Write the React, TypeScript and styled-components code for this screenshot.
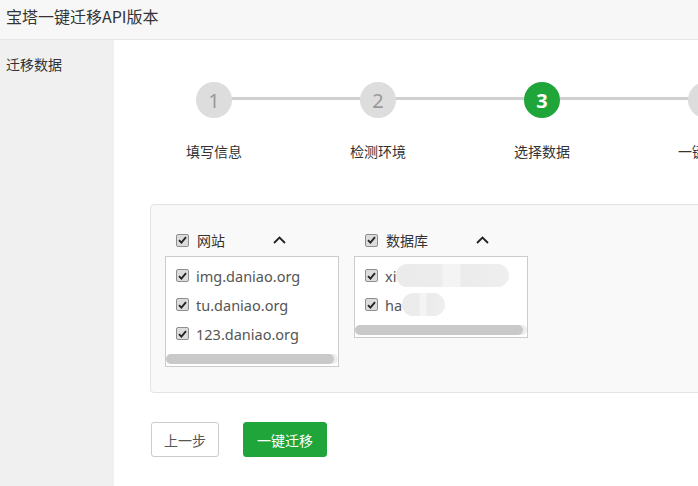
import React from "react";
import styled, { createGlobalStyle } from "styled-components";

const Global = createGlobalStyle`
  html, body { margin: 0; padding: 0; height: 100%; overflow: hidden; background: #fff; }
  body { font-family: "Noto Sans", "Noto Sans CJK SC", sans-serif; color: #333; }
  #root { height: 100%; }
  * { box-sizing: border-box; }
`;

const Page = styled.div`
  display: flex;
  flex-direction: column;
  height: 100vh;
  width: 100%;
`;

const Header = styled.header`
  height: 40px;
  flex: none;
  background: #f7f7f7;
  border-bottom: 1px solid #e6e6e6;
  display: flex;
  align-items: center;
  padding: 0 0 7px 6px;
  font-size: 16px;
  color: #333;
  font-family: "Noto Sans CJK SC", sans-serif;
`;

const Body = styled.div`
  flex: 1;
  display: flex;
  min-height: 0;
`;

const Sidebar = styled.aside`
  width: 114px;
  flex: none;
  background: #f0f0f0;
  padding: 14px 0 0 6px;
  font-size: 14px;
  color: #333;
  font-family: "Noto Sans CJK SC", sans-serif;
`;

const Main = styled.main`
  flex: 1;
  padding: 42px 0 0 36px;
  white-space: nowrap;
  min-width: 0;
  overflow: hidden;
`;

const Steps = styled.div`
  display: flex;
  margin-left: -18px;
`;

const Step = styled.div<{ $last?: boolean }>`
  width: 164px;
  flex: none;
  display: flex;
  flex-direction: column;
  align-items: center;
  position: relative;
  &::after {
    content: "";
    display: ${(p) => (p.$last ? "none" : "block")};
    position: absolute;
    left: 82px;
    width: 164px;
    top: 15px;
    height: 3px;
    background: #d0d0d0;
    z-index: 0;
  }
`;

const Circle = styled.div<{ $active?: boolean }>`
  width: 36px;
  height: 36px;
  border-radius: 50%;
  background: ${(p) => (p.$active ? "#20a53a" : "#dddddd")};
  color: ${(p) => (p.$active ? "#fff" : "#999")};
  font-weight: ${(p) => (p.$active ? 700 : 400)};
  font-size: 20px;
  display: flex;
  align-items: center;
  justify-content: center;
  position: relative;
  z-index: 1;
`;

const StepLabel = styled.div`
  margin-top: 23px;
  font-size: 14px;
  line-height: 20px;
  color: #333;
  font-family: "Noto Sans CJK SC", sans-serif;
`;

const Panel = styled.div`
  margin-top: 43px;
  width: 620px;
  background: #f9f9f9;
  border: 1px solid #e3e3e3;
  border-radius: 4px;
  padding: 25px 14px 25px;
  display: flex;
  align-items: flex-start;
  gap: 15px;
`;

const Group = styled.div`
  width: 174px;
  display: flex;
  flex-direction: column;
`;

const GroupHead = styled.div`
  height: 20px;
  display: flex;
  align-items: center;
  padding-left: 11px;
  margin-bottom: 6px;
  font-size: 14px;
  color: #333;
  font-family: "Noto Sans CJK SC", sans-serif;
`;

const HeadText = styled.span`
  margin-left: 8px;
  margin-right: 48px;
`;

const ListBox = styled.div`
  background: #fff;
  border: 1px solid #cccccc;
  padding-top: 4px;
  display: flex;
  flex-direction: column;
`;

const Item = styled.div`
  height: 29px;
  display: flex;
  align-items: center;
  padding-left: 10px;
  font-size: 14.5px;
  color: #555;
`;

const ItemText = styled.span`
  margin-left: 7px;
  display: flex;
  align-items: center;
`;

const Redact = styled.span<{ $w: number }>`
  display: inline-block;
  width: ${(p) => p.$w}px;
  height: 23px;
  border-radius: 12px;
  background: linear-gradient(90deg, #ebebeb 0%, #ececec 40%, #f4f4f4 42%, #f4f4f4 56%, #ebebeb 58%, #efefef 100%);
`;

const Track = styled.div`
  margin: 6px 0 2px;
  height: 10px;
  background: #ededed;
  border-radius: 5px;
  display: flex;
`;

const Thumb = styled.div`
  height: 10px;
  flex: 1;
  margin-right: 4px;
  background: #c9c9c9;
  border-radius: 5px;
`;

const Box = styled.span`
  width: 13px;
  height: 13px;
  flex: none;
  border: 1px solid #8e8e8e;
  border-radius: 2px;
  background: #dcdcdc;
  display: inline-flex;
  align-items: center;
  justify-content: center;
`;

const Buttons = styled.div`
  margin-top: 29px;
  margin-left: 1px;
  display: flex;
  gap: 24px;
`;

const Button = styled.button<{ $primary?: boolean }>`
  height: 35px;
  padding: 0 ${(p) => (p.$primary ? 13 : 12)}px;
  border-radius: 3px;
  border: 1px solid ${(p) => (p.$primary ? "#20a53a" : "#cccccc")};
  background: ${(p) => (p.$primary ? "#20a53a" : "#fff")};
  color: ${(p) => (p.$primary ? "#fff" : "#555")};
  font-size: 14px;
  font-family: "Noto Sans CJK SC", sans-serif;
  cursor: pointer;
`;

const Check = () => (
  <Box>
    <svg width="9" height="8" viewBox="0 0 9 8">
      <path d="M1 4.2 L3.4 6.6 L8 1.2" fill="none" stroke="#222" strokeWidth="1.8" />
    </svg>
  </Box>
);

const Chevron = () => (
  <svg width="13" height="8" viewBox="0 0 13 8">
    <path d="M1 7 L6.5 1.5 L12 7" fill="none" stroke="#222" strokeWidth="1.8" />
  </svg>
);

const steps = ["填写信息", "检测环境", "选择数据", "一键迁移"];

export default function App() {
  return (
    <Page>
      <Global />
      <Header>宝塔一键迁移API版本</Header>
      <Body>
        <Sidebar>迁移数据</Sidebar>
        <Main>
          <Steps>
            {steps.map((s, i) => (
              <Step key={s} $last={i === steps.length - 1}>
                <Circle $active={i === 2}>{i + 1}</Circle>
                <StepLabel>{s}</StepLabel>
              </Step>
            ))}
          </Steps>
          <Panel>
            <Group>
              <GroupHead>
                <Check />
                <HeadText>网站</HeadText>
                <Chevron />
              </GroupHead>
              <ListBox>
                {["img.daniao.org", "tu.daniao.org", "123.daniao.org"].map((d) => (
                  <Item key={d}>
                    <Check />
                    <ItemText>{d}</ItemText>
                  </Item>
                ))}
                <Track>
                  <Thumb />
                </Track>
              </ListBox>
            </Group>
            <Group>
              <GroupHead>
                <Check />
                <HeadText>数据库</HeadText>
                <Chevron />
              </GroupHead>
              <ListBox>
                <Item>
                  <Check />
                  <ItemText>
                    xi<Redact $w={113} />
                  </ItemText>
                </Item>
                <Item>
                  <Check />
                  <ItemText>
                    ha<Redact $w={43} />
                  </ItemText>
                </Item>
                <Track>
                  <Thumb />
                </Track>
              </ListBox>
            </Group>
          </Panel>
          <Buttons>
            <Button>上一步</Button>
            <Button $primary>一键迁移</Button>
          </Buttons>
        </Main>
      </Body>
    </Page>
  );
}
